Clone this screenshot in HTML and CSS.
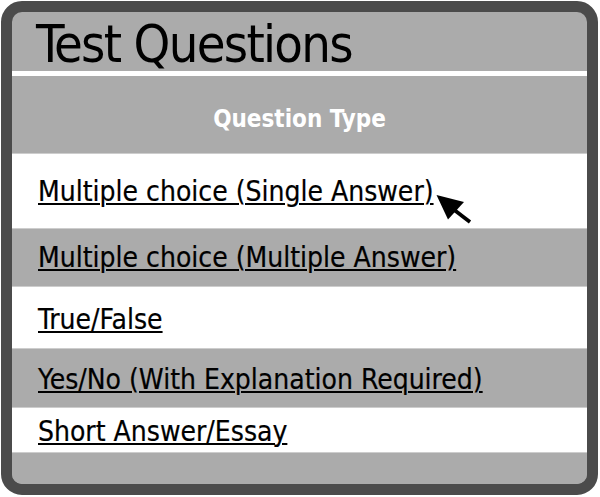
FILE: index.html
```html
<!DOCTYPE html>
<html>
<head>
<meta charset="utf-8">
<link rel="stylesheet" href="styles.css">
</head>
<body>
<div class="card">
  <div class="title">Test Questions</div>
  <div class="head">Question Type</div>
  <div class="row row-1">
    <a class="link" href="#">Multiple choice (Single Answer)</a>
    <svg class="cursor" width="38" height="32" viewBox="0 0 38 32">
      <polygon points="2.5,3 30,10 14,27.5" fill="#000"/>
      <line x1="19" y1="17" x2="36" y2="30" stroke="#000" stroke-width="3.8"/>
    </svg>
  </div>
  <div class="row row-2 alt"><a class="link" href="#">Multiple choice (Multiple Answer)</a></div>
  <div class="row row-3"><a class="link" href="#">True/False</a></div>
  <div class="row row-4 alt"><a class="link" href="#">Yes/No (With Explanation Required)</a></div>
  <div class="row row-5"><a class="link" href="#">Short Answer/Essay</a></div>
  <div class="footer alt"></div>
</div>
</body>
</html>
```

FILE: styles.css
```css
html, body {
  margin: 0;
  padding: 0;
  background: #ffffff;
}
body {
  padding: 1px;
}
.card {
  width: 597px;
  height: 494px;
  box-sizing: border-box;
  border: 11px solid #4b4b4b;
  border-radius: 21px;
  background: #ababab;
  overflow: hidden;
  display: flex;
  flex-direction: column;
  font-family: "DejaVu Sans Condensed", "DejaVu Sans", sans-serif;
}
.title {
  box-sizing: content-box;
  height: 53px;
  padding: 6px 0 0 24px;
  font-size: 52px;
  line-height: 53px;
  letter-spacing: -1.7px;
  color: #000;
  border-bottom: 5px solid #ffffff;
}
.head {
  height: 77px;
  box-sizing: border-box;
  padding-top: 31px;
  text-align: center;
  color: #ffffff;
  font-weight: bold;
  font-size: 24px;
  line-height: 24px;
}
.row {
  position: relative;
  box-sizing: border-box;
  background: #ffffff;
  border-top: 1px solid #cdcdcd;
  padding-left: 26px;
  font-size: 28px;
  line-height: 28px;
  -webkit-text-stroke: 0.2px #000;
}
.row.alt, .footer.alt {
  background: #ababab;
}
.row-1 { height: 75px; padding-top: 24px; }
.row-2 { height: 58px; padding-top: 15px; }
.row-3 { height: 62px; padding-top: 19px; }
.row-4 { height: 59px; padding-top: 17px; }
.row-5 { height: 45px; padding-top: 10px; }
.footer {
  flex: 1;
  border-top: 1px solid #cdcdcd;
}
.link {
  color: #000;
  text-decoration: underline;
  text-decoration-thickness: 2px;
  text-underline-offset: 2px;
}
.cursor {
  position: absolute;
  left: 422px;
  top: 38px;
}
```
